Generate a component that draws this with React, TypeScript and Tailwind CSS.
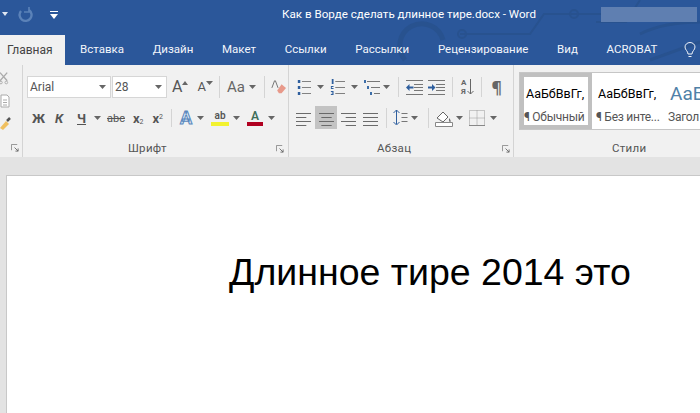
import React from "react";

const ui = "font-['Roboto','Noto_Sans',sans-serif]";

const Caret = ({ className = "" }: { className?: string }) => (
  <svg width="7" height="4" viewBox="0 0 7 4" className={`shrink-0 ${className}`}>
    <path d="M0 0h7L3.5 4z" fill="#666" />
  </svg>
);

const Sep = ({ h = "h-[22px]", className = "" }: { h?: string; className?: string }) => (
  <div className={`w-px ${h} bg-[#d4d4d4] shrink-0 ${className}`} />
);

const Launcher = () => (
  <svg width="8" height="8" viewBox="0 0 9 9" className="shrink-0">
    <path d="M.5 7V.5H7" stroke="#888" fill="none" />
    <path d="M4 4l4 4M8 5v3H5" stroke="#666" fill="none" />
  </svg>
);

const Lines = ({ w = 15, kind = "left" }: { w?: number; kind?: "left" | "center" | "right" | "justify" }) => {
  const rows = [
    [16, 3],
    [11, 7],
    [16, 11],
    [11, 15],
  ];
  return (
    <svg width={w} height="16" viewBox="0 0 16 16" preserveAspectRatio="none" className="shrink-0">
      {rows.map(([len, y]) => {
        const l = kind === "justify" ? 16 : len;
        const x = kind === "center" ? (16 - l) / 2 : kind === "right" ? 16 - l : 0;
        return <path key={y} d={`M${x} ${y}.5h${l}`} stroke="#666" />;
      })}
    </svg>
  );
};

const ListIcon = ({ kind, w = 15, className = "" }: { kind: "bullet" | "number" | "multi"; w?: number; className?: string }) => (
  <svg width={w} height="17" viewBox="0 0 17 17" preserveAspectRatio="none" className={`shrink-0 ${className}`}>
    {kind === "multi" ? (
      <>
        <path d="M4 2.500h13M8 8.500h9M11 14.500h6" stroke="#777" />
        <path d="M1 1h2v3H1zM4 7h2v3H4zM7 13h2v3H7z" fill="#3d6ea8" />
      </>
    ) : (
      <>
        <path d="M6 2.500h11M6 8.500h11M6 14.500h11" stroke="#777" />
        {kind === "bullet" ? (
          <path d="M1 1h3v3H1zM1 7h3v3H1zM1 13h3v3H1z" fill="#2f5f9e" />
        ) : (
          <path d="M2 0h2v5H2zM1 7h3v1H2v1h2v1H1zM1 12h3v4H1v-1h2v-.5H2v-1h1V13H1z" fill="#2f5f9e" />
        )}
      </>
    )}
  </svg>
);

const Indent = ({ flip, className = "" }: { flip?: boolean; className?: string }) => (
  <svg width="17" height="15" viewBox="0 0 17 15" className={`shrink-0 ${className}`}>
    <path d="M0 .5h17M0 14.500h17M8 4.500h9M8 7.500h9M8 10.500h9" stroke="#777" />
    {flip ? (
      <path d="M0 6.500h4V4l3.500 3.500L4 11V8.500H0z" fill="#2f5f9e" />
    ) : (
      <path d="M7.500 6.500h-4V4L0 7.500 3.500 11V8.500h4z" fill="#2f5f9e" />
    )}
  </svg>
);

const Title = () => (
  <div className="relative h-[35px] pb-[5px] flex items-center shrink-0">
    <svg width="700" height="65" viewBox="0 0 700 65" className="absolute left-0 top-0" fill="none" stroke="#28528f" strokeWidth="2">
      <path d="M460 34h70l14-20h60M575 14l40 0M640 0l-14 22-30 0" />
      <path d="M405 60a22 22 0 1 1 38-20" strokeWidth="5" />
      <circle cx="574" cy="14" r="4" />
      <circle cx="462" cy="34" r="4" />
      <path d="M640 34c20-10 40-12 60-12M650 60l50-18" strokeWidth="3" />
    </svg>
    <svg width="8" height="6" viewBox="0 0 8 6" className="relative ml-[2px] shrink-0">
      <path d="M0 0h6L3 4z" fill="#dfe7f2" />
    </svg>
    <svg width="16" height="16" viewBox="0 0 16 16" className="relative ml-[7px] shrink-0" fill="none" stroke="#5b82b8" strokeWidth="2.4">
      <path d="M4 4a6 6 0 1 0 8-1" />
      <path d="M12 0v5h-5" strokeWidth="1.6" />
    </svg>
    <svg width="8" height="9" viewBox="0 0 8 9" className="relative ml-[17px] shrink-0">
      <path d="M0 .5h8" stroke="#fff" />
      <path d="M0 3h8L4 8z" fill="#fff" />
    </svg>
    <div className={`relative ml-[224px] text-[11.6px] leading-none text-white whitespace-nowrap ${ui}`}>
      Как в Ворде сделать длинное тире.docx - Word
    </div>
    <div className="absolute left-[601px] top-[7px] w-[96px] h-[15px] bg-[#5f7fb1]" />
  </div>
);

const tabs = ["Вставка", "Дизайн", "Макет", "Ссылки", "Рассылки", "Рецензирование", "Вид", "ACROBAT"];

const Tabs = () => (
  <div className={`relative h-[30px] flex items-center shrink-0 text-[11.5px] text-[#f2f5fa] ${ui}`}>
    <div className="h-full w-[65px] bg-[#f1f1f1] text-[#444] pl-[7px] flex items-center shrink-0 text-[12px]">Главная</div>
    <div className="flex gap-[28.7px] ml-[15px] whitespace-nowrap">
      {tabs.map((t) => (
        <span key={t}>{t}</span>
      ))}
    </div>
    <svg width="12" height="16" viewBox="0 0 12 16" className="absolute left-[684px] top-[7px]" fill="none" stroke="#eef2f8">
      <path d="M4 12c0-3-3-4-3-7a5 4.500 0 0 1 10 0c0 3-3 4-3 7zM4.500 14.500h3" />
    </svg>
  </div>
);

const Clipboard = () => (
  <div className="w-[23px] shrink-0 border-r border-[#d4d4d4] flex flex-col gap-[9px] pt-[6px] overflow-hidden">
    <svg width="9" height="14" viewBox="0 0 10 14" fill="none" stroke="#aaa">
      <path d="M0 1l8 9M8 1L0 10" strokeWidth="1.5" />
      <circle cx="1" cy="12" r="1.500" />
      <circle cx="7" cy="12" r="1.500" />
    </svg>
    <svg width="10" height="14" viewBox="0 0 10 14" fill="#fff" stroke="#aaa">
      <path d="M1 1h6l2 2v10H1zM3 6h4M3 8.500h4M3 11h4" />
    </svg>
    <svg width="12" height="15" viewBox="0 0 12 15" fill="none">
      <path d="M7 4l3-3" stroke="#555" strokeWidth="2.5" />
      <path d="M0 11l6-7 3 3-6 6z" fill="#f0c060" />
    </svg>
    <div className="ml-[11px] mt-auto mb-[5px]">
      <Launcher />
    </div>
  </div>
);

const FontGroup = () => (
  <div className="w-[266px] shrink-0 border-r border-[#d4d4d4] flex flex-col">
    <div className={`flex items-center pl-[4px] mt-[11px] h-[22px] ${ui}`}>
      <div className="w-[84px] h-[22px] bg-white border border-[#d6d6d6] flex items-center justify-between px-[2px] pr-[4px] text-[12px] text-[#555]">
        Arial
        <Caret />
      </div>
      <div className="w-[55px] h-[22px] ml-[1px] bg-white border border-[#d6d6d6] flex items-center justify-between px-[2px] pr-[4px] text-[12px] text-[#555]">
        28
        <Caret />
      </div>
      <span className="ml-[5px] text-[16px] text-[#555]">A</span>
      <svg width="6" height="4" viewBox="0 0 6 4" className="mb-[9px] shrink-0">
        <path d="M0 4h6L3 0z" fill="#666" />
      </svg>
      <span className="ml-[9px] text-[13px] text-[#555]">A</span>
      <Caret className="mb-[9px]" />
      <Sep className="ml-[6px]" />
      <span className="ml-[7px] text-[15px] text-[#666]">Aa</span>
      <Caret className="ml-[4px]" />
      <Sep className="ml-[8px]" />
      <svg width="15" height="16" viewBox="0 0 17 16" className="ml-[6px] shrink-0">
        <path d="M7 12L12 5l5 4-5 6H9z" fill="#e8998a" />
        <path d="M1 9L4 1h1l3 8" fill="none" stroke="#666" />
      </svg>
    </div>
    <div className={`flex items-center pl-[9px] mt-[10px] h-[20px] text-[#555] ${ui}`}>
      <span className="w-[12px] text-[13px] font-bold leading-none">Ж</span>
      <span className="ml-[11px] w-[9px] text-[13px] font-bold italic leading-none">К</span>
      <span className="ml-[13px] w-[10px] text-[13px] font-bold underline leading-none">Ч</span>
      <Caret className="ml-[7px]" />
      <span className="ml-[6px] text-[11px] line-through leading-none">abc</span>
      <span className="ml-[8px] text-[13px] font-bold leading-none">
        x<sub className="text-[7px] font-normal">2</sub>
      </span>
      <span className="ml-[9px] text-[13px] font-bold leading-none">
        x<sup className="text-[7px] font-normal">2</sup>
      </span>
      <Sep h="h-[18px]" className="ml-[8px]" />
      <span className="ml-[8px] w-[14px] text-[18px] font-bold leading-none text-[#dce8f5] [-webkit-text-stroke:1px_#5a88bd]">A</span>
      <Caret className="ml-[3px]" />
      <div className="ml-[7px] w-[18px] flex flex-col items-center shrink-0">
        <span className="text-[10px] leading-[12px] font-semibold text-[#555]">ab</span>
        <div className="w-[18px] h-[4px] bg-[#f2f230]" />
      </div>
      <Caret className="ml-[4px]" />
      <div className="ml-[7px] w-[16px] flex flex-col items-center shrink-0">
        <span className="text-[12px] leading-[12px] font-semibold text-[#3f6f5a]">A</span>
        <div className="w-[16px] h-[4px] bg-[#b00020]" />
      </div>
      <Caret className="ml-[5px]" />
    </div>
    <div className="mt-auto h-[16px] flex items-center">
      <span className={`ml-[105px] text-[11.5px] text-[#555] tracking-[0.3px] ${ui}`}>Шрифт</span>
      <span className="ml-auto mr-[4px]">
        <Launcher />
      </span>
    </div>
  </div>
);

const ParaGroup = () => (
  <div className="w-[225px] shrink-0 border-r border-[#d4d4d4] flex flex-col">
    <div className="flex items-center pl-[8px] mt-[12px] h-[20px]">
      <ListIcon kind="bullet" w={14} />
      <Caret className="ml-[6px]" />
      <ListIcon kind="number" className="ml-[6px]" />
      <Caret className="ml-[6px]" />
      <ListIcon kind="multi" w={17} className="ml-[5px]" />
      <Caret className="ml-[3px]" />
      <Sep h="h-[20px]" className="ml-[8px]" />
      <Indent className="ml-[7px]" />
      <Indent flip className="ml-[5px]" />
      <Sep h="h-[20px]" className="ml-[7px]" />
      <div className={`ml-[8px] flex flex-col text-[8px] leading-[9px] font-bold text-[#666] ${ui}`}>
        <span>А</span>
        <span>Я</span>
      </div>
      <svg width="7" height="16" viewBox="0 0 7 16" className="ml-[1px] shrink-0">
        <path d="M3.500 0v15M.5 12l3 3 3-3" stroke="#666" fill="none" />
      </svg>
      <Sep h="h-[20px]" className="ml-[7px]" />
      <span className="ml-[9px] text-[16px] font-bold leading-none text-[#666]">¶</span>
    </div>
    <div className="flex items-center pl-[3px] mt-[9px] h-[23px]">
      <span className="w-[23px] h-[23px] flex items-center justify-center">
        <Lines kind="left" />
      </span>
      <span className="w-[22px] h-[23px] bg-[#c3c3c3] flex items-center justify-center">
        <Lines kind="center" />
      </span>
      <span className="w-[22px] h-[23px] flex items-center justify-center">
        <Lines kind="right" />
      </span>
      <span className="w-[22px] h-[23px] flex items-center justify-center">
        <Lines kind="justify" />
      </span>
      <Sep h="h-[20px]" className="ml-[5px]" />
      <svg width="15" height="17" viewBox="0 0 14 17" className="ml-[6px] shrink-0" fill="none">
        <path d="M0 4l3-3 3 3M3 1v14M0 13l3 3 3-3" stroke="#2f5f9e" />
        <path d="M8 4.500h6M8 8.500h6M8 12.500h6" stroke="#777" />
      </svg>
      <Caret className="ml-[3px]" />
      <Sep h="h-[20px]" className="ml-[10px]" />
      <svg width="18" height="18" viewBox="0 0 18 18" className="ml-[6px] shrink-0" fill="none">
        <path d="M2 9l6-6 5 5-5 5z" stroke="#666" fill="#fff" />
        <path d="M14 9c2 2 2 4 1 4s-1-2-1-4z" fill="#666" />
        <path d="M.5 13.500h17v4H.5z" stroke="#888" fill="#fff" />
      </svg>
      <Caret className="ml-[3px]" />
      <svg width="16" height="16" viewBox="0 0 16 16" className="ml-[6px] shrink-0" fill="none">
        <path d="M.5.5h15v15H.5zM8 .5v15M.5 8h15" stroke="#999" strokeDasharray="1 1" />
        <path d="M0 15.500h16" stroke="#888" />
      </svg>
      <Caret className="ml-[5px]" />
    </div>
    <div className="mt-auto h-[16px] flex items-center">
      <span className={`ml-[88px] text-[11.5px] text-[#555] tracking-[0.3px] ${ui}`}>Абзац</span>
      <span className="ml-auto mr-[3px]">
        <Launcher />
      </span>
    </div>
  </div>
);

const StyleCard = ({ top, bottom, active, blue }: { top: string; bottom: string; active?: boolean; blue?: boolean }) => (
  <div
    className={`w-[72px] h-[56px] shrink-0 flex flex-col whitespace-nowrap overflow-hidden border-[4px] ${active ? "border-[#c0c0c0] bg-white" : "border-transparent"}`}
  >
    <span className={`h-[24px] mt-[5px] ml-[2px] flex items-center ${blue ? "text-[19px] text-[#4f81a8]" : "text-[12.5px] text-black"}`}>{top}</span>
    <span className="text-[12px] leading-[14px] tracking-[-0.25px] text-[#555] mt-[4px]">{bottom}</span>
  </div>
);

const StylesGroup = () => (
  <div className={`flex-1 min-w-0 flex flex-col pl-[5px] ${ui}`}>
    <div className="mt-[7px] h-[58px] bg-white border border-[#c6c6c6] border-r-0 flex items-center -mr-[2px]">
      <StyleCard top="АаБбВвГг," bottom="¶ Обычный" active />
      <StyleCard top="АаБбВвГг," bottom="¶ Без инте..." />
      <StyleCard top="АаБ" bottom="Загол" blue />
    </div>
    <div className="mt-auto h-[16px] flex items-center">
      <span className="ml-[93px] text-[11.5px] text-[#555] tracking-[0.3px]">Стили</span>
    </div>
  </div>
);

export default function App() {
  return (
    <div className="w-[700px] h-[413px] overflow-hidden flex flex-col bg-[#2b579a]">
      <Title />
      <Tabs />
      <div className="h-[92px] shrink-0 flex bg-[#f1f1f1]">
        <Clipboard />
        <FontGroup />
        <ParaGroup />
        <StylesGroup />
      </div>
      <div className="flex-1 bg-[#e3e3e3] pt-[18px] pl-[6px]">
        <div className="h-full bg-white border-t border-l border-[#c8c8c8] pt-[74px] pl-[222px]">
          <div className="font-['Liberation_Sans',Arial,sans-serif] text-[37.5px] leading-[44px] text-black whitespace-nowrap">
            Длинное тире 2014 это
          </div>
        </div>
      </div>
    </div>
  );
}
